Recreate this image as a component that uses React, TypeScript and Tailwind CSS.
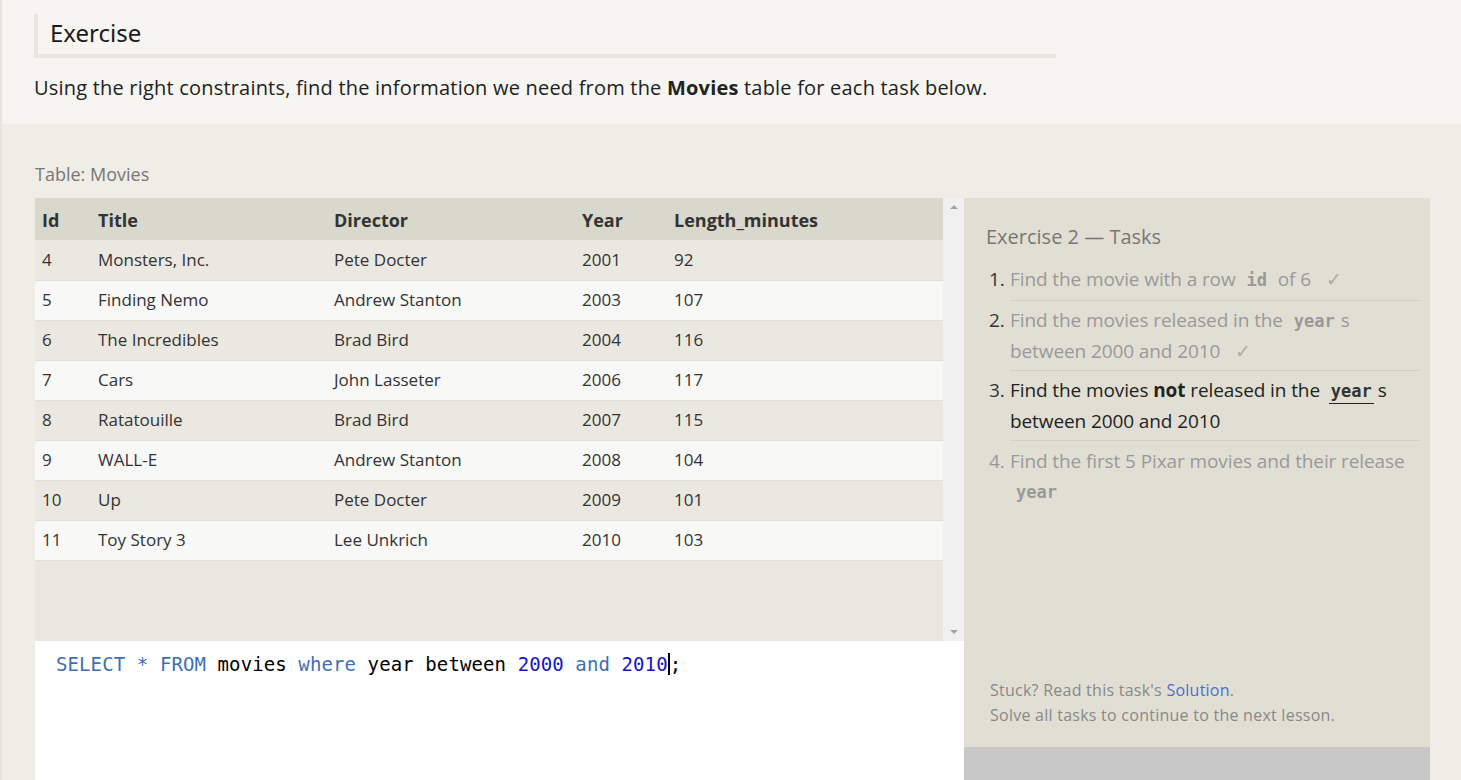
import React from "react";

interface Movie {
  id: number;
  title: string;
  director: string;
  year: number;
  length: number;
}

const movies: Movie[] = [
  { id: 4, title: "Monsters, Inc.", director: "Pete Docter", year: 2001, length: 92 },
  { id: 5, title: "Finding Nemo", director: "Andrew Stanton", year: 2003, length: 107 },
  { id: 6, title: "The Incredibles", director: "Brad Bird", year: 2004, length: 116 },
  { id: 7, title: "Cars", director: "John Lasseter", year: 2006, length: 117 },
  { id: 8, title: "Ratatouille", director: "Brad Bird", year: 2007, length: 115 },
  { id: 9, title: "WALL-E", director: "Andrew Stanton", year: 2008, length: 104 },
  { id: 10, title: "Up", director: "Pete Docter", year: 2009, length: 101 },
  { id: 11, title: "Toy Story 3", director: "Lee Unkrich", year: 2010, length: 103 },
];

const Code: React.FC<{ children: React.ReactNode; active?: boolean }> = ({
  children,
  active,
}) => (
  <code
    className={
      active
        ? "mx-[4px] border-b border-[#222] px-[2px] pb-[2px] font-['DejaVu_Sans_Mono',monospace] text-[17px] font-bold tracking-normal text-[#333]"
        : "mx-[4px] px-[2px] font-['DejaVu_Sans_Mono',monospace] text-[17px] font-bold tracking-normal text-[#999]"
    }
  >
    {children}
  </code>
);

const Check = () => <span className="ml-[10px] text-[#aaa]">✓</span>;

export default function App() {
  return (
    <div className="min-h-[780px] border-l-2 border-[#e6e4dc] font-['Open_Sans',sans-serif] text-[#222]">
      <div className="bg-[#f6f5f1] px-[32px] pt-[14px] pb-[21px]">
        <div className="w-[1022px] border-b-4 border-l-4 border-[#e8e6df] pl-[12px] pt-[2px] pb-[4px]">
          <h1 className="font-['Noto_Sans',sans-serif] text-[24px] leading-[34px] text-[#1b1b1b]">
            Exercise
          </h1>
        </div>
        <p className="mt-[15px] text-[20px] leading-[30px] tracking-[0.2px]">
          Using the right constraints, find the information we need from the{" "}
          <b className="font-bold">Movies</b> table for each task below.
        </p>
      </div>

      <div className="flex bg-[#efede6] pl-[33px] pt-[38px]">
        <div className="flex w-[929px] flex-col">
          <div className="mb-[12px] text-[18px] leading-[24px] text-[#777]">Table: Movies</div>
          <div className="flex h-[443px] bg-[#e9e7e0]">
            <table className="h-fit w-[908px] border-collapse text-left text-[17px]">
              <thead>
                <tr className="h-[42px] bg-[#d9d8cd] text-[18px] text-[#333]">
                  <th className="w-[63px] pl-[7px] pt-[3px] font-bold">Id</th>
                  <th className="w-[236px] pt-[3px] font-bold">Title</th>
                  <th className="w-[248px] pt-[3px] font-bold">Director</th>
                  <th className="w-[92px] pt-[3px] font-bold">Year</th>
                  <th className="pt-[3px] font-bold">Length_minutes</th>
                </tr>
              </thead>
              <tbody>
                {movies.map((m, i) => (
                  <tr
                    key={m.id}
                    className={
                      i % 2 === 0
                        ? "h-[40px] border-b border-[#e0ded6] bg-[#eae8e1] text-[#333]"
                        : "h-[40px] border-b border-[#e0ded6] bg-[#f8f8f7] text-[#333]"
                    }
                  >
                    <td className="pl-[7px]">{m.id}</td>
                    <td>{m.title}</td>
                    <td>{m.director}</td>
                    <td>{m.year}</td>
                    <td>{m.length}</td>
                  </tr>
                ))}
              </tbody>
            </table>
            <div className="flex w-[21px] flex-col items-center justify-between bg-[#f0f0f0] py-[7px]">
              <div className="h-0 w-0 border-x-[4px] border-b-[4px] border-x-transparent border-b-[#a3a3a3]" />
              <div className="h-0 w-0 border-x-[4px] border-t-[4px] border-x-transparent border-t-[#a3a3a3]" />
            </div>
          </div>
          <div className="h-[139px] bg-white pl-[21px] pt-[10px] font-['DejaVu_Sans_Mono',monospace] text-[19px] leading-[26px] tracking-[0.1px]">
            <span className="text-[#3f6fb3]">SELECT</span> <span className="text-[#3f6fb3]">*</span>{" "}
            <span className="text-[#3f6fb3]">FROM</span> <span className="text-black">movies</span>{" "}
            <span className="text-[#3f6fb3]">where</span> <span className="text-black">year</span>{" "}
            <span className="text-black">between</span> <span className="text-[#1414c4]">2000</span>{" "}
            <span className="text-[#3f6fb3]">and</span> <span className="text-[#1414c4]">2010</span>
            <span className="border-l-2 border-black text-black">;</span>
          </div>
        </div>

        <div className="flex w-[466px] flex-col">
          <div className="mt-[36px] flex h-[549px] flex-col bg-[#e1dfd4] pl-[22px] pr-[10px] pt-[26px]">
            <h2 className="text-[20px] leading-[26px] text-[#777]">Exercise 2 — Tasks</h2>
            <ol className="mt-[14px] text-[19px] leading-[30px] tracking-[-0.1px]">
              <li className="flex pb-[2px]">
                <span className="w-[24px] pl-[3px] text-[#333]">1.</span>
                <div className="flex-1 border-b border-[#d2d0c5] pb-[5px] text-[#999]">
                  Find the movie with a row <Code>id</Code> of 6 <Check />
                </div>
              </li>
              <li className="flex pt-[2px]">
                <span className="w-[24px] pl-[3px] text-[#333]">2.</span>
                <div className="flex-1 border-b border-[#d2d0c5] pb-[4px] text-[#999]">
                  Find the movies released in the <Code>year</Code>s between 2000 and 2010 <Check />
                </div>
              </li>
              <li className="flex pt-[4px]">
                <span className="w-[24px] pl-[3px] text-[#333]">3.</span>
                <div className="flex-1 border-b border-[#d2d0c5] pb-[4px] text-[#222]">
                  Find the movies <b className="font-bold">not</b> released in the{" "}
                  <Code active>year</Code>s between 2000 and 2010
                </div>
              </li>
              <li className="flex pt-[5px]">
                <span className="w-[24px] pl-[3px] text-[#999]">4.</span>
                <div className="flex-1 pr-[10px] text-[#999]">
                  Find the first 5 Pixar movies and their release <Code>year</Code>
                </div>
              </li>
            </ol>
            <div className="mt-auto mb-[19px] pl-[4px] text-[16px] leading-[25px] tracking-[0.25px] text-[#888]">
              <div>
                Stuck? Read this task's <span className="text-[#4b6cd1]">Solution</span>.
              </div>
              <div>Solve all tasks to continue to the next lesson.</div>
            </div>
          </div>
          <div className="h-[33px] bg-[#c8c8c8]" />
        </div>
        <div className="flex-1" />
      </div>
    </div>
  );
}
